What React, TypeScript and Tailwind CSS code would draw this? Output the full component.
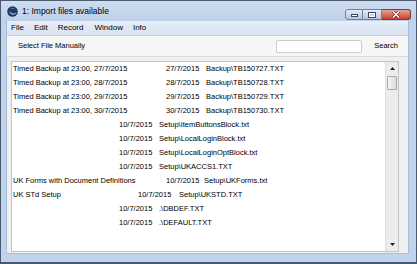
import React from "react";

type Row = { d: string; dw: string; date: string; tw: string; p: string };

const rows: Row[] = [
  { d: "Timed Backup at 23:00, 27/7/2015", dw: "w-[153px]", date: "27/7/2015", tw: "w-[40px]", p: "Backup\\TB150727.TXT" },
  { d: "Timed Backup at 23:00, 28/7/2015", dw: "w-[153px]", date: "28/7/2015", tw: "w-[40px]", p: "Backup\\TB150728.TXT" },
  { d: "Timed Backup at 23:00, 29/7/2015", dw: "w-[153px]", date: "29/7/2015", tw: "w-[40px]", p: "Backup\\TB150729.TXT" },
  { d: "Timed Backup at 23:00, 30/7/2015", dw: "w-[153px]", date: "30/7/2015", tw: "w-[40px]", p: "Backup\\TB150730.TXT" },
  { d: "", dw: "w-[106px]", date: "10/7/2015", tw: "w-[40px]", p: "Setup\\ItemButtonsBlock.txt" },
  { d: "", dw: "w-[106px]", date: "10/7/2015", tw: "w-[40px]", p: "Setup\\LocalLoginBlock.txt" },
  { d: "", dw: "w-[106px]", date: "10/7/2015", tw: "w-[40px]", p: "Setup\\LocalLoginOptBlock.txt" },
  { d: "", dw: "w-[106px]", date: "10/7/2015", tw: "w-[40px]", p: "Setup\\UKACCS1.TXT" },
  { d: "UK Forms with Document Definitions", dw: "w-[153px]", date: "10/7/2015", tw: "w-[38px]", p: "Setup\\UKForms.txt" },
  { d: "UK STd Setup", dw: "w-[125px]", date: "10/7/2015", tw: "w-[41px]", p: "Setup\\UKSTD.TXT" },
  { d: "", dw: "w-[106px]", date: "10/7/2015", tw: "w-[40px]", p: ".\\DBDEF.TXT" },
  { d: "", dw: "w-[106px]", date: "10/7/2015", tw: "w-[40px]", p: ".\\DEFAULT.TXT" },
];

function Logo() {
  return (
    <svg width="11" height="11" viewBox="0 0 11 11">
      <circle cx="5.5" cy="5.5" r="5.3" fill="#1d3a66" />
      <path d="M2.2 4.2 C3 7.6 6.8 8.8 9.4 6.4 C7.6 9.6 2.8 9.4 2.2 4.2 Z" fill="#ffffff" />
      <path d="M3.2 2.6 C4.6 1.6 6.6 1.8 7.6 3.2 C6.2 2.6 4.6 2.6 3.2 2.6 Z" fill="#9fb6d8" />
    </svg>
  );
}

export default function App() {
  return (
    <div className="w-[417px] h-[264px] bg-[#2c6375] overflow-hidden" style={{ fontFamily: '"Liberation Sans", Arial, sans-serif' }}>
      <div className="w-[417px] h-[263px] border border-[#4b5a6c] bg-[#bfd3ec] flex flex-col">
        {/* Title bar */}
        <div className="h-[20px] flex bg-gradient-to-b from-[#cfdef1] to-[#bcd0ea]">
          <div className="flex items-center pl-[6px] h-[20px]">
            <Logo />
            <span className="ml-[4px] text-[8.5px] text-black leading-none">1: Import files available</span>
          </div>
          <div className="ml-auto mt-[8px] pr-[5px] flex h-[11px]">
            <div className="w-[18px] h-[11px] rounded-l-[3px] border border-[#6f8196] bg-gradient-to-b from-[#e4ecf6] to-[#b4c6de] flex items-end justify-center pb-[2px]">
              <div className="w-[7px] h-[3px] bg-white border border-[#3d4b5c]" />
            </div>
            <div className="w-[19px] h-[11px] border border-l-0 border-[#6f8196] bg-gradient-to-b from-[#e4ecf6] to-[#b4c6de] flex items-center justify-center">
              <div className="w-[8px] h-[6px] border border-[#3d4b5c] bg-white flex items-center justify-center">
                <div className="w-[4px] h-[2px] bg-[#c8d6e8]" />
              </div>
            </div>
            <div className="w-[29px] h-[11px] rounded-r-[3px] border border-l-0 border-[#7d3a30] bg-gradient-to-b from-[#e8a293] to-[#c2412f] flex items-center justify-center">
              <svg width="8" height="7" viewBox="0 0 8 7">
                <path d="M1 0.5 L7 6.5 M7 0.5 L1 6.5" stroke="#5a1f18" strokeWidth="2.6" />
                <path d="M1 0.5 L7 6.5 M7 0.5 L1 6.5" stroke="#ffffff" strokeWidth="1.5" />
              </svg>
            </div>
          </div>
        </div>
        {/* Body */}
        <div className="flex-1 pl-[6px] pr-[8px] pb-[8px] flex flex-col">
          <div className="flex-1 flex flex-col border border-[#a9bdd6] border-t-0 -mx-px">
            {/* Menu bar */}
            <div className="h-[15px] flex items-center gap-[10px] pl-[4px] text-[8px] text-black bg-gradient-to-b from-[#e7eef8] to-[#d8e2f0] border-b border-[#c5d3e6]">
              <span>File</span>
              <span>Edit</span>
              <span>Record</span>
              <span className="ml-[1px]">Window</span>
              <span>Info</span>
            </div>
            {/* Toolbar */}
            <div className="h-[21px] flex items-center bg-[#f6f6f6] border-b border-[#d9d9d9] text-[7.5px] text-black">
              <span className="pl-[11px]">Select File Manually</span>
              <div className="ml-auto w-[86px] h-[13px] bg-white border border-[#cdcdcd] rounded-[2px]" />
              <span className="ml-[12px] mr-[10px]">Search</span>
            </div>
            {/* List area */}
            <div className="flex-1 bg-[#f0f0f0] pl-[4px] pr-[9px] pt-[4px] pb-[1px] flex">
              <div className="flex-1 bg-white border border-[#c3c3c3] flex">
                <div className="flex-1 pl-[1px] text-[7.5px] text-black">
                  {rows.map((r, i) => (
                    <div key={i} className="h-[14px] flex items-center whitespace-nowrap">
                      <span className={r.dw}>{r.d}</span>
                      <span className={r.tw}>{r.date}</span>
                      <span>{r.p}</span>
                    </div>
                  ))}
                </div>
                <div className="w-[13px] bg-[#ececec] border-l border-[#e0e0e0] flex flex-col items-center">
                  <svg width="7" height="12" viewBox="0 0 7 12" className="mt-[1px]">
                    <path d="M3.5 4 L6 7 L1 7 Z" fill="#222" />
                  </svg>
                  <div className="mt-[1px] w-[10px] h-[14px] border border-[#a9a9a9] rounded-[1px] bg-gradient-to-r from-[#f4f4f4] to-[#dcdcdc]" />
                  <div className="flex-1" />
                  <svg width="7" height="12" viewBox="0 0 7 12" className="mb-[1px]">
                    <path d="M1 5 L6 5 L3.5 8 Z" fill="#222" />
                  </svg>
                </div>
              </div>
            </div>
          </div>
        </div>
      </div>
    </div>
  );
}
